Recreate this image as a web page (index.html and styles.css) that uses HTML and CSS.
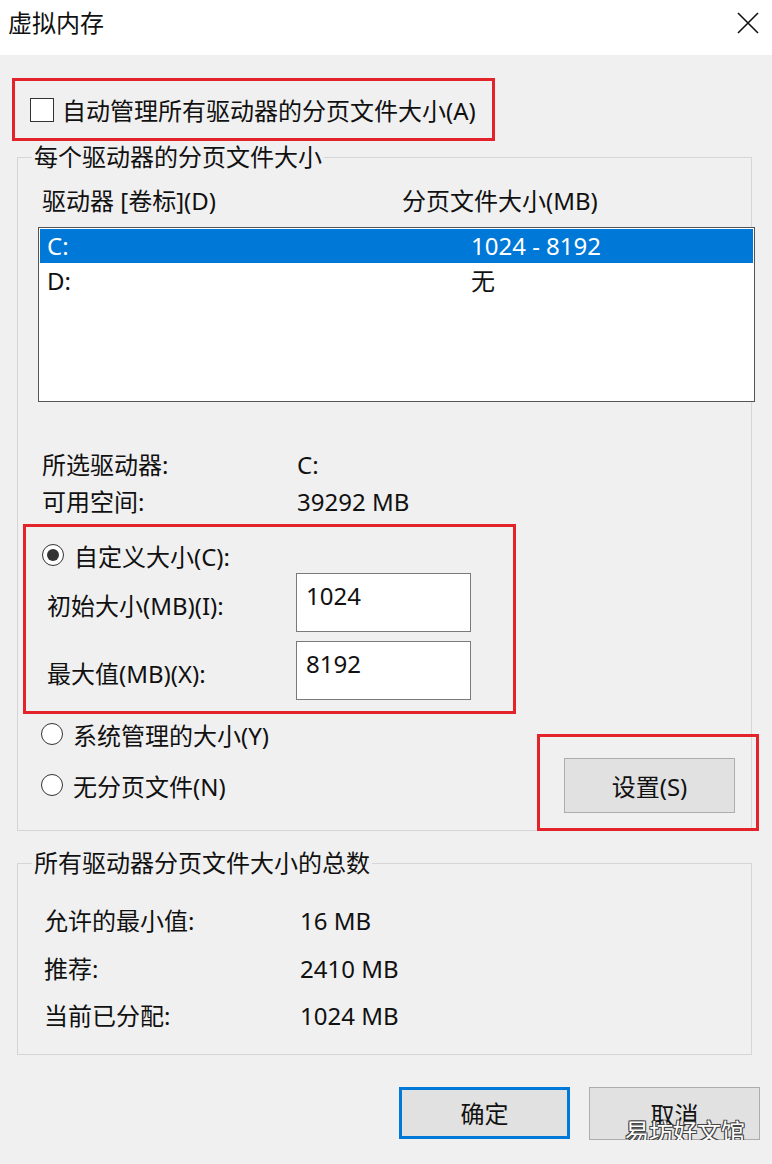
FILE: index.html
```html
<!DOCTYPE html>
<html lang="zh-CN">
<head>
  <meta charset="UTF-8" />
  <meta name="viewport" content="width=device-width, initial-scale=1.0"/>
  <title>虚拟内存</title>
  <link rel="stylesheet" href="styles.css">
</head>
<body>

  <header class="titlebar">
    <span class="title">虚拟内存</span>
    <svg class="close" width="24" height="24" viewBox="0 0 24 24">
      <path d="M2 2 L22 22 M22 2 L2 22" stroke="#111" stroke-width="1.6" fill="none"/>
    </svg>
  </header>

  <main class="dialog">
    <div class="auto-row annot">
      <span class="checkbox"></span>
      <span>自动管理所有驱动器的分页文件大小(A)</span>
    </div>

    <fieldset class="group drives">
      <legend>每个驱动器的分页文件大小</legend>
      <div class="list-head">
        <span class="col-drive">驱动器 [卷标](D)</span>
        <span>分页文件大小(MB)</span>
      </div>
      <div class="listbox">
        <div class="list-row selected"><span class="col-name">C:</span><span>1024 - 8192</span></div>
        <div class="list-row"><span class="col-name">D:</span><span>无</span></div>
      </div>

      <div class="info">
        <span>所选驱动器:</span><span>C:</span>
        <span>可用空间:</span><span>39292 MB</span>
      </div>

      <div class="custom annot">
        <div class="radio-row"><span class="radio checked"></span><span>自定义大小(C):</span></div>
        <div class="field-row">
          <span class="field-label">初始大小(MB)(I):</span>
          <div class="textbox">1024</div>
        </div>
        <div class="field-row">
          <span class="field-label">最大值(MB)(X):</span>
          <div class="textbox">8192</div>
        </div>
      </div>

      <div class="bottom-row">
        <div class="radios">
          <div class="radio-row"><span class="radio"></span><span>系统管理的大小(Y)</span></div>
          <div class="radio-row"><span class="radio"></span><span>无分页文件(N)</span></div>
        </div>
        <div class="set-wrap">
          <button class="btn set-btn">设置(S)</button>
          <span class="annot-box"></span>
        </div>
      </div>
    </fieldset>

    <fieldset class="group totals">
      <legend>所有驱动器分页文件大小的总数</legend>
      <div class="totals-grid">
        <span>允许的最小值:</span><span>16 MB</span>
        <span>推荐:</span><span>2410 MB</span>
        <span>当前已分配:</span><span>1024 MB</span>
      </div>
    </fieldset>

    <div class="actions">
      <button class="btn ok-btn">确定</button>
      <button class="btn">取消</button>
      <span class="watermark">易坊好文馆</span>
    </div>
  </main>

</body>
</html>
```

FILE: styles.css
```css
body {
  margin: 0;
  font-family: 'Noto Sans', 'Noto Sans CJK SC', sans-serif;
  font-size: 24px;
  color: #111;
  background-color: #f0f0f0;
}

.titlebar {
  display: flex;
  justify-content: space-between;
  align-items: center;
  height: 55px;
  padding: 0 12px 10px 8px;
  box-sizing: border-box;
  background-color: #fff;
}

.title {
  line-height: 30px;
}

.close {
  display: block;
}

.dialog {
  padding: 0;
}

.annot {
  border: 3px solid #e2232a;
  box-sizing: border-box;
}

.auto-row {
  display: flex;
  align-items: center;
  gap: 8px;
  width: 483px;
  height: 63px;
  margin: 23px 0 0 12px;
  padding-left: 15px;
}

.checkbox {
  width: 24px;
  height: 24px;
  border: 1.5px solid #333;
  background: #fff;
  box-sizing: border-box;
}

.group {
  margin: 0 20px 0 17px;
  padding: 0;
  border: 1px solid #d6d6d6;
  min-width: 0;
}

.group legend {
  margin-left: 14px;
  padding: 0 2px;
  line-height: 28px;
}

.drives {
  margin-top: 2px;
}

.list-head {
  display: flex;
  margin: 15px 0 0 24px;
  line-height: 30px;
}

.col-drive {
  width: 360px;
}

.listbox {
  width: 717px;
  height: 175px;
  margin: 11px 0 0 20px;
  padding: 1px;
  border: 1.5px solid #555;
  box-sizing: border-box;
  background: #fff;
}

.list-row {
  display: flex;
  height: 35px;
  line-height: 35px;
  padding-left: 7px;
}

.list-row.selected {
  height: 34px;
  line-height: 34px;
  background-color: #0078d7;
  color: #fff;
}

.col-name {
  width: 424px;
}

.info {
  display: grid;
  grid-template-columns: 255px auto;
  margin: 44px 0 0 24px;
  line-height: 37px;
}

.custom {
  width: 493px;
  margin: 4px 0 0 5px;
  padding: 10px 0 11px 16px;
}

.radio-row {
  display: flex;
  align-items: center;
  gap: 10px;
  height: 36px;
}

.radio {
  position: relative;
  width: 22px;
  height: 22px;
  border: 1.5px solid #333;
  border-radius: 50%;
  background: #fff;
  box-sizing: border-box;
}

.radio.checked::after {
  content: "";
  position: absolute;
  inset: 4px;
  border-radius: 50%;
  background: #333;
}

.field-row {
  display: flex;
  align-items: center;
  margin-left: 5px;
}

.field-row + .field-row {
  margin-top: 9px;
}

.field-label {
  width: 249px;
  padding-top: 4px;
}

.textbox {
  width: 175px;
  height: 59px;
  padding: 6px 0 0 9px;
  border: 1.5px solid #7a7a7a;
  box-sizing: border-box;
  background: #fff;
  line-height: 32px;
}

.bottom-row {
  display: flex;
  justify-content: space-between;
  align-items: flex-start;
  padding: 0 16px 17px 23px;
}

.radios {
  display: flex;
  flex-direction: column;
  gap: 15px;
  padding-top: 2px;
}

.btn {
  font: inherit;
  color: #111;
  background-color: #e1e1e1;
  border: 1.5px solid #adadad;
  box-sizing: border-box;
  width: 171px;
  height: 53px;
  padding: 0;
}

.set-wrap {
  position: relative;
  margin-top: 44px;
}

.set-btn {
  display: block;
  height: 55px;
}

.annot-box {
  position: absolute;
  inset: -24px -24px -18px -27px;
  border: 3px solid #e2232a;
}

.totals {
  margin-top: 18px;
}

.totals-grid {
  display: grid;
  grid-template-columns: 256px auto;
  margin: 20px 0 14px 26px;
  line-height: 47.5px;
}

.actions {
  position: relative;
  display: flex;
  justify-content: flex-end;
  gap: 19px;
  margin: 32px 12px 0 0;
}

.ok-btn {
  border: 3px solid #0078d7;
  height: 52px;
}

.watermark {
  position: absolute;
  right: 15px;
  top: 30px;
  color: #fff;
  line-height: 30px;
  text-shadow: -1px -1px 0 #444, 1px -1px 0 #444, -1px 1px 0 #444, 1px 1px 0 #444;
}
```
